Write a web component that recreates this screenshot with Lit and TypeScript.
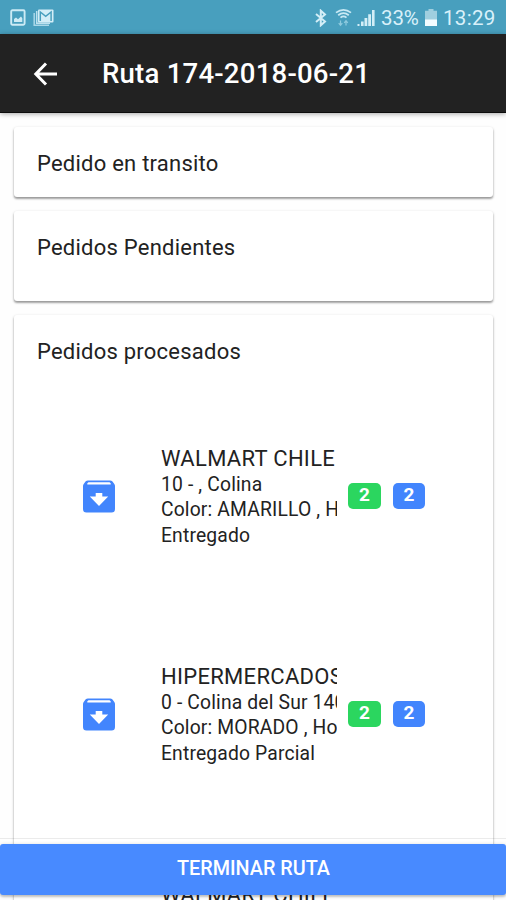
import { LitElement, html, css } from "lit";
import { customElement, property } from "lit/decorators.js";

interface Order {
  client: string;
  lines: string[];
  delivered: number;
  total: number;
}

const ORDERS: Order[] = [
  { client: "WALMART CHILE", lines: ["10 - , Colina", "Color: AMARILLO , Hora", "Entregado"], delivered: 2, total: 2 },
  { client: "HIPERMERCADOS", lines: ["0 - Colina del Sur 1400", "Color: MORADO , Hora", "Entregado Parcial"], delivered: 2, total: 2 },
  { client: "WALMART CHILE", lines: [], delivered: 2, total: 2 },
];

@customElement("status-bar")
class StatusBar extends LitElement {
  static styles = css`
    :host {
      display: flex;
      align-items: center;
      box-sizing: border-box;
      height: 34px;
      padding: 1px 10px 0 10px;
      background: #489fbe;
      color: #d9f1fa;
      font: 400 20.5px/34px Roboto, sans-serif;
    }
    svg { display: block; flex: none; }
    .mail { margin-left: 7px; }
    .gap { flex: 1; }
    .wifi { margin-left: 7px; }
    .signal { margin-left: 5px; }
    .pct { margin-left: 6px; width: 41px; white-space: nowrap; letter-spacing: -0.1px; }
    .battery { margin-left: 3px; }
    .time { margin-left: 6px; width: 53px; white-space: nowrap; letter-spacing: 0.3px; }
  `;
  render() {
    return html`
      <svg width="16" height="18" viewBox="0 0 16 18">
        <rect x="1.2" y="1.2" width="13.4" height="14.6" rx="1.2" fill="none" stroke="#cdebf5" stroke-width="1.9" />
        <path d="M4 13V10L6 8.4L8 10.3L11 7.6L12.3 9.2V13Z" fill="#cdebf5" />
      </svg>
      <svg class="mail" width="21" height="18" viewBox="0 0 21 18">
        <path d="M1.2 4V16.3H16" fill="none" stroke="#a9d8e8" stroke-width="1.5" />
        <path d="M3.7 2V14.3H17" fill="none" stroke="#bce2ef" stroke-width="1.5" />
        <rect x="5" y=".5" width="15.5" height="13" rx="1" fill="#d3eef7" />
        <path d="M7.3 12V3L12.7 7.3L18.1 3V12" fill="none" stroke="#489fbe" stroke-width="1.5" />
      </svg>
      <span class="gap"></span>
      <svg width="14" height="18" viewBox="0 0 14 18">
        <path d="M2 5L11 12.5L6.8 16.3V1.7L11 5.5L2 13" fill="none" stroke="#d3eef7" stroke-width="2" />
      </svg>
      <svg class="wifi" width="17" height="19" viewBox="0 0 17 19">
        <g fill="none" stroke="#c8e9f4" stroke-width="1.8">
          <path d="M1 4.6Q8.500-1 16 4.600" />
          <path d="M3.200 7.200Q8.500 3 13.800 7.200" />
          <path d="M5.500 9.600Q8.500 7.200 11.500 9.600" />
        </g>
        <path d="M5.500 12.500V17M3.700 15.200L5.500 17.400L7.300 15.200M11 17.500V13M9.200 14.800L11 12.600L12.800 14.800" fill="none" stroke="#8fcbdf" stroke-width="1.200" />
      </svg>
      <svg class="signal" width="18" height="18" viewBox="0 0 18 18">
        <path d="M.5 15h2v2h-2zM4 12.500h2.600V17H4zM7.500 9h2.800v8H7.500zM11.200 5.200h2.800V17h-2.800zM15 1h2.600v16H15z" fill="#d3eef7" />
      </svg>
      <span class="pct">33%</span>
      <svg class="battery" width="12" height="18" viewBox="0 0 12 18">
        <path d="M3.500 0H8.500V1.800H12V11H0V1.800H3.500Z" fill="#a0cfdf" />
        <path d="M0 10.500H12V17H0z" fill="#f3fcff" />
      </svg>
      <span class="time">13:29</span>
    `;
  }
}

@customElement("order-item")
class OrderItem extends LitElement {
  @property({ attribute: false }) order!: Order;
  static styles = css`
    :host {
      display: flex;
      align-items: center;
      box-sizing: border-box;
      height: 218px;
      padding-left: 69px;
      color: #222;
      font-family: Roboto, sans-serif;
    }
    .icon { display: block; flex: none; margin-bottom: 2px; }
    .text { flex: none; margin-left: 46px; width: 176px; height: 102px; overflow: hidden; white-space: nowrap; }
    .client { font-size: 22px; line-height: 26px; height: 26px; letter-spacing: 0.3px; }
    .line { font-size: 19.3px; line-height: 25.4px; height: 25.4px; letter-spacing: 0.16px; }
    .badge {
      flex: none;
      width: 32px;
      height: 26px;
      margin-bottom: 2px;
      border-radius: 5px;
      color: #fff;
      text-align: center;
      font-size: 19px;
      line-height: 24px;
      font-weight: 700;
    }
    .ok { background: #2bd65f; margin-left: 11px; width: 33px; }
    .all { background: #4285fd; margin-left: 12px; }
  `;
  render() {
    return html`
      <svg class="icon" width="32" height="33" viewBox="0 0 32 33">
        <path d="M5 0.500H27Q28.500.500 29.500 1.500L31.300 4Q32 4.800 32 6V29Q32 32.500 28.500 32.500H3.500Q0 32.500 0 29V6Q0 4.800.700 4L2.500 1.500Q3.500.500 5 .500Z" fill="#4285fd" />
        <path d="M4.300 3.200L5.500 2.300H26.500L27.700 3.200V4.500H4.300Z" fill="#fff" />
        <path d="M12.700 13H19.300V16.500H25.200L16 26L6.800 16.500H12.700Z" fill="#fff" />
      </svg>
      <div class="text">
        <div class="client">${this.order.client}</div>
        ${this.order.lines.map((l) => html`<div class="line">${l}</div>`)}
      </div>
      <div class="badge ok">${this.order.delivered}</div>
      <div class="badge all">${this.order.total}</div>
    `;
  }
}

@customElement("app-root")
class AppRoot extends LitElement {
  static styles = css`
    :host {
      display: flex;
      flex-direction: column;
      position: relative;
      width: 506px;
      height: 900px;
      overflow: hidden;
      background: #fefefe;
      color: #222;
      font-family: Roboto, sans-serif;
    }
    status-bar { flex: none; }
    .header {
      flex: none;
      display: flex;
      align-items: center;
      box-sizing: border-box;
      height: 79px;
      padding: 1px 0 0 33px;
      background: #222;
      border-bottom: 1px solid #0c0c0c;
      box-shadow: 0 1px 5px rgba(0, 0, 0, 0.35);
      color: #fff;
      z-index: 1;
    }
    .title { margin-left: 44px; padding-top: 1px; font-size: 27.6px; font-weight: 500; line-height: 34px; white-space: nowrap; letter-spacing: 0.2px; }
    .content {
      flex: 1;
      min-height: 0;
      overflow: hidden;
      display: flex;
      flex-direction: column;
      gap: 14px;
      padding: 14px 13px 0 14px;
    }
    .card {
      flex: none;
      box-sizing: border-box;
      border-radius: 3px;
      background: #fff;
      box-shadow: 0 2px 2px rgba(0, 0, 0, 0.28), 0 1px 3px rgba(0, 0, 0, 0.22);
      padding-top: 21px;
    }
    .transit { height: 70px; }
    .pending { height: 90px; }
    .card-title { padding-left: 23px; height: 32px; font-size: 22px; line-height: 32px; white-space: nowrap; letter-spacing: 0.23px; }
    .orders { margin-top: 20px; }
    .footer {
      position: absolute;
      left: 0;
      right: 0;
      bottom: 0;
      height: 62px;
      box-sizing: border-box;
      padding-top: 5px;
      border-top: 1px solid rgba(0, 0, 0, 0.08);
      z-index: 2;
    }
    .finish {
      display: flex;
      align-items: center;
      justify-content: center;
      box-sizing: border-box;
      height: 51px;
      padding: 0 0 3px 1px;
      border-radius: 3px;
      background: #488aff;
      box-shadow: 0 2px 2px rgba(0, 0, 0, 0.14), 0 1px 4px rgba(0, 0, 0, 0.2);
      color: #fff;
      font-size: 19.8px;
      font-weight: 500;
    }
  `;
  render() {
    return html`
      <status-bar></status-bar>
      <div class="header">
        <svg width="25" height="24" viewBox="0 0 25 24">
          <path d="M13 1.500L2.800 12L13 22.500M3 12H24" fill="none" stroke="#fff" stroke-width="3" />
        </svg>
        <div class="title">Ruta 174-2018-06-21</div>
      </div>
      <div class="content">
        <div class="card transit"><div class="card-title">Pedido en transito</div></div>
        <div class="card pending"><div class="card-title">Pedidos Pendientes</div></div>
        <div class="card">
          <div class="card-title">Pedidos procesados</div>
          <div class="orders">${ORDERS.map((o) => html`<order-item .order=${o}></order-item>`)}</div>
        </div>
      </div>
      <div class="footer"><div class="finish">TERMINAR RUTA</div></div>
    `;
  }
}
